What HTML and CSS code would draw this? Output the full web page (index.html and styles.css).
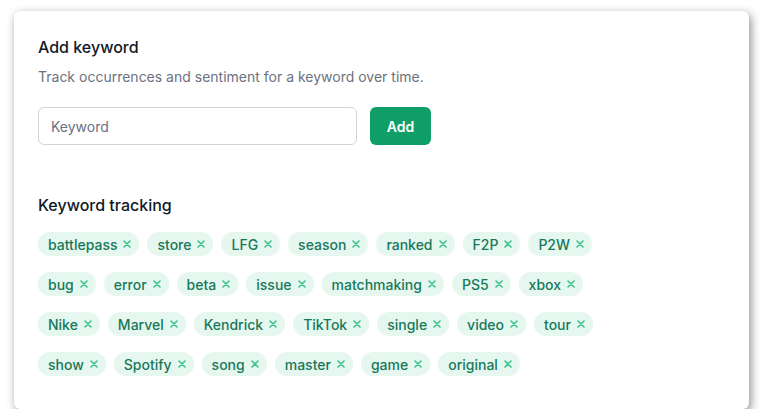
FILE: index.html
```html
<!DOCTYPE html>
<html lang="en">
<head>
<meta charset="utf-8">
<title>Add keyword</title>
<link rel="stylesheet" href="styles.css">
</head>
<body>
<div class="card">
  <h2 class="title">Add keyword</h2>
  <p class="subtitle">Track occurrences and sentiment for a keyword over time.</p>
  <form class="add-row">
    <input class="input" type="text" placeholder="Keyword">
    <button class="btn" type="button">Add</button>
  </form>
  <h3 class="title section">Keyword tracking</h3>
  <div class="chips">
    <span class="chip">battlepass<svg class="x" viewBox="0 0 8 8"><path d="M1 1L7 7M7 1L1 7"/></svg></span>
    <span class="chip">store<svg class="x" viewBox="0 0 8 8"><path d="M1 1L7 7M7 1L1 7"/></svg></span>
    <span class="chip">LFG<svg class="x" viewBox="0 0 8 8"><path d="M1 1L7 7M7 1L1 7"/></svg></span>
    <span class="chip">season<svg class="x" viewBox="0 0 8 8"><path d="M1 1L7 7M7 1L1 7"/></svg></span>
    <span class="chip">ranked<svg class="x" viewBox="0 0 8 8"><path d="M1 1L7 7M7 1L1 7"/></svg></span>
    <span class="chip">F2P<svg class="x" viewBox="0 0 8 8"><path d="M1 1L7 7M7 1L1 7"/></svg></span>
    <span class="chip">P2W<svg class="x" viewBox="0 0 8 8"><path d="M1 1L7 7M7 1L1 7"/></svg></span>
    <span class="chip">bug<svg class="x" viewBox="0 0 8 8"><path d="M1 1L7 7M7 1L1 7"/></svg></span>
    <span class="chip">error<svg class="x" viewBox="0 0 8 8"><path d="M1 1L7 7M7 1L1 7"/></svg></span>
    <span class="chip">beta<svg class="x" viewBox="0 0 8 8"><path d="M1 1L7 7M7 1L1 7"/></svg></span>
    <span class="chip">issue<svg class="x" viewBox="0 0 8 8"><path d="M1 1L7 7M7 1L1 7"/></svg></span>
    <span class="chip">matchmaking<svg class="x" viewBox="0 0 8 8"><path d="M1 1L7 7M7 1L1 7"/></svg></span>
    <span class="chip">PS5<svg class="x" viewBox="0 0 8 8"><path d="M1 1L7 7M7 1L1 7"/></svg></span>
    <span class="chip">xbox<svg class="x" viewBox="0 0 8 8"><path d="M1 1L7 7M7 1L1 7"/></svg></span>
    <span class="chip">Nike<svg class="x" viewBox="0 0 8 8"><path d="M1 1L7 7M7 1L1 7"/></svg></span>
    <span class="chip">Marvel<svg class="x" viewBox="0 0 8 8"><path d="M1 1L7 7M7 1L1 7"/></svg></span>
    <span class="chip">Kendrick<svg class="x" viewBox="0 0 8 8"><path d="M1 1L7 7M7 1L1 7"/></svg></span>
    <span class="chip">TikTok<svg class="x" viewBox="0 0 8 8"><path d="M1 1L7 7M7 1L1 7"/></svg></span>
    <span class="chip">single<svg class="x" viewBox="0 0 8 8"><path d="M1 1L7 7M7 1L1 7"/></svg></span>
    <span class="chip">video<svg class="x" viewBox="0 0 8 8"><path d="M1 1L7 7M7 1L1 7"/></svg></span>
    <span class="chip">tour<svg class="x" viewBox="0 0 8 8"><path d="M1 1L7 7M7 1L1 7"/></svg></span>
    <span class="chip">show<svg class="x" viewBox="0 0 8 8"><path d="M1 1L7 7M7 1L1 7"/></svg></span>
    <span class="chip">Spotify<svg class="x" viewBox="0 0 8 8"><path d="M1 1L7 7M7 1L1 7"/></svg></span>
    <span class="chip">song<svg class="x" viewBox="0 0 8 8"><path d="M1 1L7 7M7 1L1 7"/></svg></span>
    <span class="chip">master<svg class="x" viewBox="0 0 8 8"><path d="M1 1L7 7M7 1L1 7"/></svg></span>
    <span class="chip">game<svg class="x" viewBox="0 0 8 8"><path d="M1 1L7 7M7 1L1 7"/></svg></span>
    <span class="chip">original<svg class="x" viewBox="0 0 8 8"><path d="M1 1L7 7M7 1L1 7"/></svg></span>
  </div>
</div>
</body>
</html>
```

FILE: styles.css
```css
html, body {
  margin: 0;
  padding: 0;
  background: #ffffff;
}
body {
  font-family: Inter, "Noto Sans", sans-serif;
  color: #111827;
  padding: 11px 13px 0 14px;
}
.card {
  box-sizing: border-box;
  width: 735px;
  height: 398px;
  background: #ffffff;
  border-radius: 6px;
  box-shadow: 2px 3px 10px rgba(0, 0, 0, 0.45);
  padding: 26px 24px 0 24px;
}
.title {
  margin: 0;
  font-size: 16px;
  line-height: 20px;
  font-weight: 500;
  color: #111827;
}
.subtitle {
  margin: 10px 0 0 0;
  font-size: 14px;
  line-height: 20px;
  color: #6b7280;
}
.add-row {
  display: flex;
  gap: 13px;
  margin-top: 20px;
}
.input {
  box-sizing: border-box;
  width: 319px;
  height: 38px;
  border: 1px solid #d1d5db;
  border-radius: 6px;
  padding: 0 12px;
  font-family: inherit;
  font-size: 14px;
  color: #111827;
  outline: none;
}
.input::placeholder {
  color: #6b7280;
}
.btn {
  box-sizing: border-box;
  width: 61px;
  height: 38px;
  border: none;
  border-radius: 6px;
  background: #0f9f66;
  color: #ffffff;
  font-family: inherit;
  font-size: 14px;
  font-weight: 600;
}
.section {
  margin-top: 50px;
}
.chips {
  display: flex;
  flex-wrap: wrap;
  gap: 16px 8px;
  margin-top: 17px;
  width: 570px;
}
.chip {
  display: inline-flex;
  align-items: center;
  height: 24px;
  padding: 0 8px 0 10px;
  border-radius: 12px;
  background: #e6f7ef;
  color: #17795a;
  font-size: 14px;
  font-weight: 500;
}
.x {
  width: 8px;
  height: 8px;
  margin-left: 6px;
  fill: none;
  stroke: #3cc48e;
  stroke-width: 1.6;
  stroke-linecap: round;
}
```
